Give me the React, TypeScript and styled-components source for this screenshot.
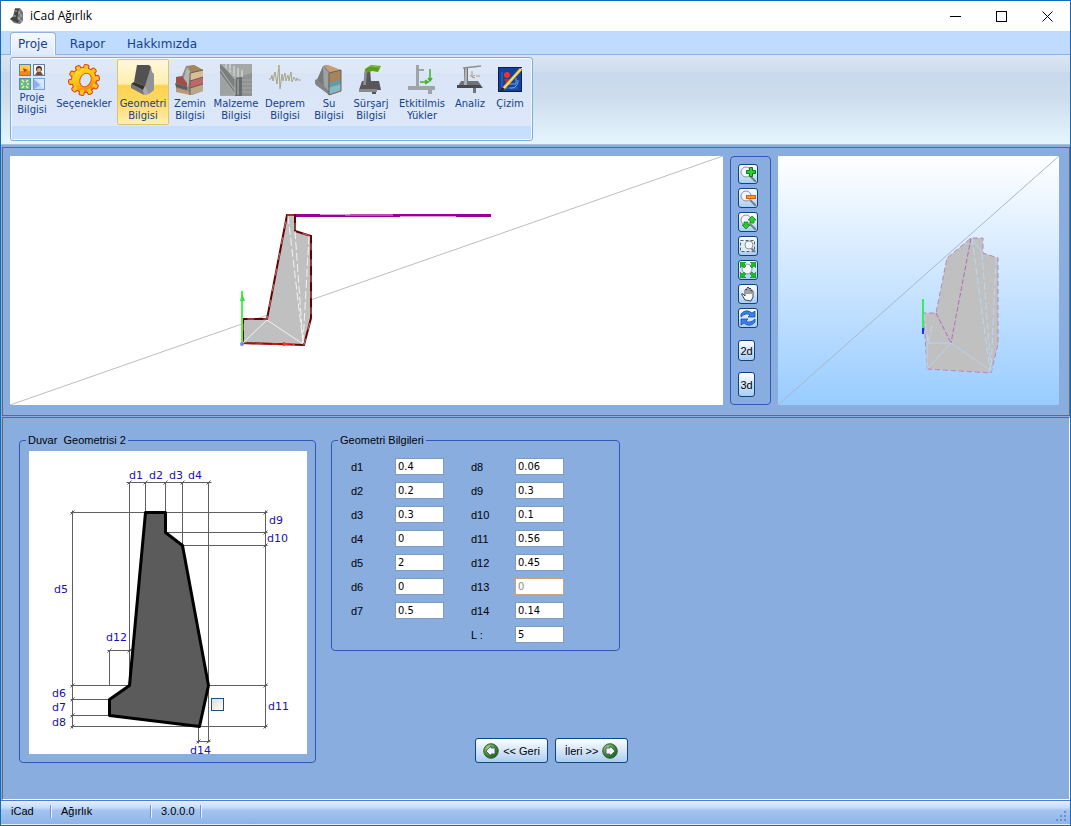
import React from "react";
import styled, { createGlobalStyle, css } from "styled-components";

const uiFont = `"Liberation Sans", Arial, sans-serif`;
const wideFont = `"DejaVu Sans", Verdana, sans-serif`;

const GlobalStyle = createGlobalStyle`
  * { box-sizing: border-box; }
  body { margin: 0; background: #8aade0; font-family: ${uiFont}; font-size: 11px; color: #000; }
  button, input { font: inherit; color: inherit; }
`;

const Window = styled.div`
  display: flex;
  flex-direction: column;
  min-height: 100vh;
  border: 1px solid #0f6cbd;
`;

/* Title bar */
const TitleBar = styled.header`
  display: flex;
  align-items: center;
  height: 30px;
  padding-left: 9px;
  background: #fff;
`;

const Title = styled.h1`
  flex: 1;
  margin: 0 0 0 6px;
  font: 400 12px/16px "Open Sans", "Noto Sans", sans-serif;
`;

const CaptionButton = styled.button`
  display: flex;
  align-items: center;
  justify-content: center;
  width: 46px;
  height: 30px;
  padding: 0;
  border: 0;
  background: none;
`;

/* Ribbon */
const TabStrip = styled.nav`
  position: relative;
  z-index: 1;
  display: flex;
  height: 23px;
  padding: 1px 0 0 9px;
  background: #bfdbff;
`;

const Tab = styled.button<{ $active?: boolean }>`
  height: 23px;
  padding: 0 7px;
  margin-right: 6px;
  border: 1px solid transparent;
  border-bottom: 0;
  border-radius: 4px 4px 0 0;
  background: none;
  color: #15428b;
  font: 12px/20px ${wideFont};
  ${(p) =>
    p.$active &&
    css`
      border-color: #8db2e3;
      background: linear-gradient(#f5f9ff, #dfeafa);
      box-shadow: inset 1px 1px 0 #fff, inset -1px 0 0 #fff;
    `}
`;

const Ribbon = styled.div`
  height: 91px;
  padding: 2px 8px 3px 9px;
  border-top: 1px solid #8db2e3;
  border-bottom: 1px solid #a3c2e2;
  background: linear-gradient(#dbe5f3 0, #cfdded 17px, #c8d8ee 18px, #cfdeed 45px, #e3f4fd 86px);
`;

const Group = styled.div`
  display: flex;
  align-items: flex-start;
  width: max-content;
  height: 84px;
  padding: 1px 1px 0 2px;
  border: 1px solid #86abd2;
  border-radius: 3px;
  background: linear-gradient(#e1e9f6 0, #dee7f5 15px, #d9e5f6 15px, #dce8f8 68px, #c5deff 68px, #c8e0ff 100%);
  box-shadow: inset 0 0 0 1px #f4f9ff;
`;

const RibbonButton = styled.button<{ $width: number; $active?: boolean }>`
  display: flex;
  flex-direction: column;
  align-items: center;
  gap: 2px;
  width: ${(p) => p.$width}px;
  height: 66px;
  padding: 4px 0 0;
  border: 1px solid transparent;
  border-radius: 2px;
  background: none;
  color: #15428b;
  font: 10px/12px ${wideFont};
  white-space: pre-line;
  ${(p) =>
    p.$active &&
    css`
      border-color: #dcc278;
      background: linear-gradient(#fff9dc 0, #ffeeae 38%, #ffd24f 39%, #ffd964 65%, #fff0b0 100%);
    `}
`;

/* Views */
const ViewPanel = styled.section`
  display: flex;
  margin-top: 2px;
  padding: 8px 10px 10px 7px;
  border: 1px solid #646a70;
  background: #8aade0;
  margin-left: 1px;
`;

const View = styled.div<{ $share: number; $shaded?: boolean }>`
  flex: ${(p) => p.$share} 1 0;
  min-width: 0;
  height: 249px;
  background: ${(p) => (p.$shaded ? "linear-gradient(#fff, #99ccff)" : "#fff")};
  svg { display: block; width: 100%; height: 100%; }
`;

const ToolColumn = styled.div`
  display: flex;
  flex-direction: column;
  align-items: flex-start;
  gap: 4px;
  width: 41px;
  margin: 0 7px;
  padding: 7px;
  border: 1px solid #2f5bb7;
  border-radius: 4px;
`;

const buttonFace = css`
  border: 1px solid #0d4580;
  border-radius: 3px;
  background: linear-gradient(#fdfeff, #d5e6f9 50%, #a9cdf3);
`;

const ToolButton = styled.button`
  display: flex;
  width: 20px;
  height: 20px;
  padding: 1px;
  ${buttonFace}
`;

const ModeButton = styled.button<{ $tall?: boolean }>`
  width: 17px;
  height: ${(p) => (p.$tall ? 25 : 21)}px;
  margin-top: ${(p) => (p.$tall ? 7 : 8)}px;
  padding: 0;
  font-size: 11px;
  ${buttonFace}
`;

/* Form */
const FormPanel = styled.main`
  display: flex;
  flex: 1;
  align-items: flex-start;
  gap: 15px;
  margin-top: 1px;
  margin-left: 1px;
  padding: 16px;
  border: 1px solid #646a70;
  border-right-color: #fff;
  border-bottom-color: #fff;
  background: #8aade0;
`;

const Box = styled.fieldset`
  min-width: 0;
  margin: 0;
  padding: 0;
  border: 1px solid #2f5bb7;
  border-radius: 4px;
`;

const Legend = styled.legend`
  margin-left: 6px;
  padding: 0 2px;
  line-height: 13px;
  white-space: pre;
`;

const Sketch = styled.div`
  position: relative;
  width: 278px;
  height: 303px;
  margin: 4px 8px 8px 9px;
  background: #fff;
  svg { display: block; overflow: visible; }
`;

const SketchCheck = styled.input`
  position: absolute;
  left: 182px;
  top: 247px;
  width: 13px;
  height: 13px;
  margin: 0;
  appearance: none;
  border: 1px solid #1c5180;
  background: linear-gradient(135deg, #dcdcd7, #fff);
`;

const FormColumn = styled.div`
  display: flex;
  flex-direction: column;
  align-items: flex-start;
`;

const Fields = styled.div`
  display: grid;
  grid-template-columns: 120px 120px;
  width: 287px;
  padding: 11px 0 7px 19px;
`;

const FieldList = styled.div`
  display: flex;
  flex-direction: column;
  gap: 7px;
`;

const Field = styled.label`
  display: flex;
  align-items: center;
  justify-content: space-between;
  width: 93px;
  height: 17px;
`;

const TextBox = styled.input`
  width: 49px;
  height: 17px;
  padding: 0 2px;
  border: 1px solid #7f9db9;
  border-radius: 0;
  background: #fff;
  font: 11px/13px "DejaVu Sans Condensed", Tahoma, sans-serif;
  &:disabled { border-color: #c9a66b; color: #8a8a8a; }
`;

const NavRow = styled.div`
  display: flex;
  gap: 7px;
  margin: 87px 0 0 144px;
`;

const NavButton = styled.button`
  display: flex;
  align-items: center;
  justify-content: center;
  gap: 4px;
  width: 73px;
  height: 25px;
  padding: 0;
  white-space: nowrap;
  ${buttonFace}
`;

/* Status bar */
const StatusBar = styled.footer`
  display: flex;
  align-items: center;
  height: 25px;
  padding-bottom: 2px;
  border-top: 1px solid #4a7fc4;
  border-bottom: 1px solid #e8eef8;
  background: linear-gradient(#e3efff 0, #c2dafb 7px, #a5c5f0 9px, #8fb4e8 100%);
`;

const StatusCell = styled.span<{ $width: number }>`
  width: ${(p) => p.$width}px;
  padding-left: 10px;
  border-right: 1px solid #6c97cf;
  box-shadow: 1px 0 0 #eef5ff;
  line-height: 13px;
`;

const Grip = styled.svg`
  margin: 8px 3px 0 auto;
`;

/* Ribbon icons */
const ProjectIcon = () => (
  <svg width="26" height="26" viewBox="0 0 26 26">
    <rect x=".5" y=".5" width="11" height="11" fill="#ffcf3f" stroke="#5d7fa8" />
    <path d="M1 7h10v4H1z" fill="#f08a1c" />
    <path d="M4 4l5 2-4 2z" fill="#d5311a" />
    <rect x="14.500" y=".5" width="11" height="11" fill="#f4f6fa" stroke="#5d7fa8" />
    <circle cx="20" cy="5" r="3" fill="#4d342b" />
    <circle cx="20" cy="6" r="2" fill="#e6b08a" />
    <path d="M16 11l2-3h4l2 3z" fill="#6b4c44" />
    <rect x=".5" y="14.500" width="11" height="11" fill="#68b98c" stroke="#5d8aa8" />
    <path d="M3 16l2 2M9 16l-2 2M3 24l2-2M9 24l-2-2M2 20h2M8 20h2" stroke="#f2f3a5" strokeWidth="1.500" fill="none" />
    <rect x="14.500" y="14.500" width="11" height="11" fill="#c3d8fb" stroke="#7d9fd0" />
    <path d="M15 15l8 5-8 5z" fill="#8fb0ee" />
    <path d="M15 15h10v10z" fill="#e4eefe" opacity=".7" />
  </svg>
);

const gearTeeth = Array.from({ length: 10 }, (_, i) => i * 36);

const GearIcon = () => (
  <svg width="32" height="32" viewBox="0 0 32 32">
    <defs>
      <linearGradient id="gear" gradientUnits="userSpaceOnUse" x1="8" y1="0" x2="22" y2="32">
        <stop offset="0" stopColor="#ffee3a" />
        <stop offset=".5" stopColor="#ffc313" />
        <stop offset="1" stopColor="#f5600c" />
      </linearGradient>
      <mask id="gearHole">
        <path d="M0 0h32v32H0z" fill="#fff" />
        <ellipse cx="17.500" cy="16" rx="5.500" ry="7" transform="rotate(25 17.500 16)" fill="#000" />
      </mask>
    </defs>
    <g mask="url(#gearHole)">
      <g fill="#dc3f10">
        <circle cx="16" cy="16" r="13" />
        {gearTeeth.map((a) => (
          <rect key={a} x="13" y="0" width="6" height="6" rx="2" transform={`rotate(${a + 10} 16 16)`} />
        ))}
      </g>
      <path d="M16 16m-12 0a12 12 0 1 0 24 0a12 12 0 1 0-24 0" fill="url(#gear)" />
      <g fill="#ffc21a">
        {gearTeeth.map((a) => (
          <rect key={a} x="14" y="1" width="4" height="5" rx="1" transform={`rotate(${a + 10} 16 16)`} />
        ))}
      </g>
    </g>
    <ellipse cx="17.500" cy="16" rx="5.500" ry="7" transform="rotate(25 17.500 16)" fill="none" stroke="#dd5512" />
  </svg>
);

const WallIcon = () => (
  <svg width="32" height="32" viewBox="0 0 32 32">
    <path d="M24 3l1 5 2 2v16l-5 4-5 1-3-6 4-5z" fill="#939396" />
    <path d="M10 1h12l2 2-6 19-11-4z" fill="#515154" />
    <path d="M7 18l-3 2 12 6 2-4z" fill="#333336" />
    <path d="M4 20l12 6 1 5-13-7z" fill="#77777a" />
    <path d="M22 30l-5 1-1-5 2-4z" fill="#a9a9ac" />
  </svg>
);

const SoilIcon = () => (
  <svg width="32" height="32" viewBox="0 0 32 32">
    <path d="M12 2l8-1 9 5v21l-11 4-16-4v-8l6-7z" fill="#8b8b88" />
    <path d="M13 3l7-2 9 5-11 3z" fill="#a8845e" />
    <path d="M16 9l13-3v8l-13 4z" fill="#d9bd95" />
    <path d="M16 17l13-4v8l-13 3z" fill="#bd6a66" />
    <path d="M16 24l13-4v7l-13 4z" fill="#bda789" />
    <path d="M13 3l4 6-3 14-6-3z" fill="#b5b6b8" />
    <path d="M2 13l6-1 5 7v4L2 19z" fill="#a04e4a" />
    <path d="M1 19l12 4v3L2 23z" fill="#5c5c5c" />
    <path d="M2 24l14 4v3L2 28z" fill="#bd9a72" />
    <path d="M16 9v22M16 17l13-4M16 24l13-4M16 9l13-3" stroke="#6b5d50" fill="none" />
  </svg>
);

const MaterialIcon = () => (
  <svg width="32" height="32" viewBox="0 0 32 32">
    <path d="M0 0h32v32H0z" fill="#a4a8a6" />
    <path d="M21 12l11-3v23H20z" fill="#8f9492" />
    <path d="M0 0l17 15v17L0 9z" fill="#7b7f7d" />
    <path d="M14 14l8-1v19h-7z" fill="#686c6a" />
    <path d="M6 0v5M10 0v9M14 2v10M18 4v9M22 6v7" stroke="#cfd2d0" strokeWidth="1.500" />
    <path d="M4 2l12 13M2 0l13 15v16M8 3l8 10M18 15v16M0 5l15 21" stroke="#b4b8b6" fill="none" />
    <path d="M22 16h10M22 20h10M22 24h10M22 28h10" stroke="#a3a8a6" fill="none" />
    <path d="M0 11l14 20H0z" fill="#9ea3a1" />
  </svg>
);

const QuakeIcon = () => (
  <svg width="32" height="32" viewBox="0 0 32 32">
    <path d="M0 15h2l1-4 1 6 2-9 2 12 2-19 1 24 2-15 1 7 2-8 1 8 2-6 1 6 2-9 1 10 2-5 2 4 1-3 1 2h3" fill="none" stroke="#a8a58b" />
  </svg>
);

const WaterIcon = () => (
  <svg width="32" height="32" viewBox="0 0 32 32">
    <path d="M10 2l4-1 14 6v20l-12 3-13-9v-3z" fill="#77797a" />
    <path d="M11 2l4-1 13 5-11 3z" fill="#c79d72" />
    <path d="M16 9l12-3v11l-13 3z" fill="#a8845c" />
    <path d="M15 19l13-3v11l-12 3z" fill="#5d9eac" />
    <path d="M15 24l13-4v7l-12 3z" fill="#86b8c4" />
    <path d="M10 2l6 7-1 19-4-2z" fill="#9fa1a3" />
    <path d="M2 16l2-1 12 12v4L2 20z" fill="#828486" />
    <path d="M28 6v21l-12 4V9z" fill="none" stroke="#6a6358" />
  </svg>
);

const SurchargeIcon = () => (
  <svg width="32" height="32" viewBox="0 0 32 32">
    <path d="M10 5h5l1 12h8l2 9h-5v4h-4v-4H4l3-9h2z" fill="#55575a" />
    <path d="M4 25h18v3H4z" fill="#87898b" />
    <path d="M10 6h2l-1 15H8z" fill="#8b8d90" />
    <path d="M10 5l6-4 10 1-3 6-6-1-5 2z" fill="#5c9f1f" />
    <path d="M15 2l10 1" stroke="#8bc24a" />
  </svg>
);

const LoadIcon = () => (
  <svg width="32" height="32" viewBox="0 0 32 32">
    <path d="M10 1h3v21h16v4h-3v4h-4v-4H2v-4h8z" fill="#9fa4a8" />
    <path d="M13 6h5" stroke="#9fa4a8" strokeWidth="2" />
    <path d="M24 5v12M22 14l2 3 2-3M14 18h9M19 16l3 2-3 2" fill="none" stroke="#3fb321" strokeWidth="1.500" />
  </svg>
);

const AnalysisIcon = () => (
  <svg width="32" height="32" viewBox="0 0 32 32">
    <path d="M10 4h4v13h10l5 7h-7v5h-3v-5H3l4-7h3z" fill="#6f7376" />
    <path d="M3 21h23l2 3H3z" fill="#484b4e" />
    <path d="M11 4h2v17h-3z" fill="#b0b4b7" />
    <path d="M9 4l18-2" stroke="#8e9194" strokeWidth="1.500" />
    <path d="M18 7v6l3 1M16 11l2 2 3-2M22 12h4" stroke="#aa9d7a" fill="none" />
  </svg>
);

const DrawIcon = () => (
  <svg width="32" height="32" viewBox="0 0 32 32">
    <rect x="4.500" y="3.500" width="23" height="24" fill="#12439f" stroke="#0b1c56" />
    <path d="M8 8v16h16" fill="none" stroke="#3d70c8" />
    <path d="M16 24a7 7 0 0 0 8-8M14 20h8v-6" fill="none" stroke="#7fa9ea" />
    <circle cx="13" cy="11" r="3" fill="#f03420" />
    <path d="M10 15h6v4h-4z" fill="#d02418" />
    <path d="M27 5L9 25" stroke="#e9bd36" strokeWidth="3" />
    <path d="M28 4L10 24" stroke="#fff1a2" />
    <path d="M8 23l-2 5 5-3z" fill="#222" />
  </svg>
);

/* View tool icons */
const Lens = ({ x = 6, y = 6, r = 5 }: { x?: number; y?: number; r?: number }) => (
  <g>
    <path d={`M${x + r - 1} ${y + r - 1}L16 16`} stroke="#75808d" strokeWidth="2" />
    <circle cx={x} cy={y} r={r} fill="#f1f7fc" stroke="#8793a1" />
  </g>
);
const ToolSvg = ({ children }: { children: React.ReactNode }) => (
  <svg width="16" height="16" viewBox="0 0 16 16">{children}</svg>
);
const ZoomInIcon = () => (
  <ToolSvg>
    <Lens />
    <path d="M9.500 1.500h3v3h3v3h-3v3h-3v-3h-3v-3h3z" fill="#2fce2d" stroke="#087a10" />
  </ToolSvg>
);
const ZoomOutIcon = () => (
  <ToolSvg>
    <Lens />
    <rect x="6.500" y="5.500" width="9" height="3" fill="#f79a2b" stroke="#c96510" />
  </ToolSvg>
);
const ZoomDynamicIcon = () => (
  <ToolSvg>
    <Lens />
    <path d="M12 2l4 4h-2v3h-4V6H8zM6 15l-4-4h2V8h4v3h2z" fill="#2fce2d" stroke="#087a10" strokeWidth=".7" />
  </ToolSvg>
);
const ZoomWindowIcon = () => (
  <ToolSvg>
    <rect x=".5" y="2.500" width="14" height="11" fill="#e3ebf3" stroke="#57606b" strokeDasharray="3 2" />
    <path d="M11 10l4 4" stroke="#75808d" strokeWidth="2" />
    <circle cx="9" cy="7" r="4" fill="#f6faff" stroke="#8793a1" />
  </ToolSvg>
);
const ZoomExtentsIcon = () => (
  <ToolSvg>
    <Lens x={7} y={7} r={5} />
    <path d="M0 0h6L4 2l2 2-2 2-2-2-2 2zM16 0v6l-2-2-2 2-2-2 2-2-2-2zM0 16v-6l2 2 2-2 2 2-2 2 2 2zM16 16h-6l2-2-2-2 2-2 2 2 2-2z" fill="#1fba28" stroke="#087a10" strokeWidth=".5" />
  </ToolSvg>
);
const PanIcon = () => (
  <ToolSvg>
    <path
      d="M5 14L2 9q-1-2 1-1l2 2V4q1-2 2 0V2q1-2 2 0v1q1-2 2 0v2q1-1 2 0v6l-2 4zM7 4v4M9 3v5M11 4v4"
      fill="#f7f9fb"
      stroke="#30363e"
      strokeWidth=".9"
    />
  </ToolSvg>
);
const RotateIcon = () => (
  <ToolSvg>
    <path d="M1 4q5-6 11-1l3-2v6H8l2-2Q6 2 1 7z" fill="#3a82e8" stroke="#1749b4" strokeWidth=".8" />
    <path d="M15 12q-5 6-11 1l-3 2V9h7l-2 2q4 3 9-2z" fill="#3a82e8" stroke="#1749b4" strokeWidth=".8" />
  </ToolSvg>
);

const ArrowBall = ({ forward }: { forward?: boolean }) => (
  <svg width="16" height="16" viewBox="0 0 16 16">
    <defs>
      <radialGradient id="ball" cx=".35" cy=".3" r=".8">
        <stop offset="0" stopColor="#a6dc85" />
        <stop offset=".5" stopColor="#3f9a32" />
        <stop offset="1" stopColor="#045a0c" />
      </radialGradient>
    </defs>
    <circle cx="8" cy="8" r="7.300" fill="url(#ball)" stroke="#4a5648" />
    <path d={forward ? "M4 5h4V3l5 5-5 5v-2H4z" : "M12 5H8V3L3 8l5 5v-2h4z"} fill="#f2f2f8" stroke="#3c4474" strokeWidth=".8" />
  </svg>
);

const ribbonItems = [
  { label: "Proje\nBilgisi", width: 38, Icon: ProjectIcon },
  { label: "Seçenekler", width: 66, Icon: GearIcon },
  { label: "Geometri\nBilgisi", width: 52, Icon: WallIcon, active: true },
  { label: "Zemin\nBilgisi", width: 42, Icon: SoilIcon },
  { label: "Malzeme\nBilgisi", width: 50, Icon: MaterialIcon },
  { label: "Deprem\nBilgisi", width: 48, Icon: QuakeIcon },
  { label: "Su\nBilgisi", width: 40, Icon: WaterIcon },
  { label: "Sürşarj\nBilgisi", width: 44, Icon: SurchargeIcon },
  { label: "Etkitilmis\nYükler", width: 58, Icon: LoadIcon },
  { label: "Analiz", width: 38, Icon: AnalysisIcon },
  { label: "Çizim", width: 42, Icon: DrawIcon },
];

const tools = [
  { name: "Yakınlaş", Icon: ZoomInIcon },
  { name: "Uzaklaş", Icon: ZoomOutIcon },
  { name: "Dinamik", Icon: ZoomDynamicIcon },
  { name: "Pencere", Icon: ZoomWindowIcon },
  { name: "Tümü", Icon: ZoomExtentsIcon },
  { name: "Kaydır", Icon: PanIcon },
  { name: "Döndür", Icon: RotateIcon },
];

type FieldItem = { label: string; value: string; disabled?: boolean };

const leftFields: FieldItem[] = [
  { label: "d1", value: "0.4" },
  { label: "d2", value: "0.2" },
  { label: "d3", value: "0.3" },
  { label: "d4", value: "0" },
  { label: "d5", value: "2" },
  { label: "d6", value: "0" },
  { label: "d7", value: "0.5" },
];

const rightFields: FieldItem[] = [
  { label: "d8", value: "0.06" },
  { label: "d9", value: "0.3" },
  { label: "d10", value: "0.1" },
  { label: "d11", value: "0.56" },
  { label: "d12", value: "0.45" },
  { label: "d13", value: "0", disabled: true },
  { label: "d14", value: "0.14" },
  { label: "L :", value: "5" },
];

const dimensionLabels: [string, number, number][] = [
  ["d1", 129, 479], ["d2", 149, 479], ["d3", 169, 479], ["d4", 188, 479],
  ["d9", 269, 524], ["d10", 267, 542], ["d5", 54, 593], ["d12", 106, 641],
  ["d6", 52, 697], ["d7", 52, 711], ["d8", 52, 726], ["d11", 268, 710], ["d14", 190, 754],
];

const ticks: [number, number][] = [
  [129, 482], [145, 482], [165, 482], [182, 482], [208, 482],
  [72, 512], [265, 512], [265, 532], [265, 545], [72, 685], [265, 685],
  [72, 699], [72, 715], [72, 726], [265, 726], [109, 650], [129, 650], [198, 741], [208, 741],
];

const FrontView = () => (
  <svg viewBox="10 156 713 249" preserveAspectRatio="xMidYMid slice">
    <path d="M10 405L723 156" stroke="#bdbdbd" />
    <path d="M287 215h8v16l16 5v82l-7 27-61-2v-24h24z" fill="#c0c0c0" stroke="#660000" strokeWidth="2" />
    <path d="M287 215h8v16l16 5v82l-7 27-61-2v-24h24z" fill="none" stroke="#e8caca" strokeWidth=".6" strokeDasharray="7 9" />
    <path d="M267 320l-24 23M267 320l36 24" stroke="#f2f2f2" fill="none" />
    <path d="M288 216l15 127M295 231l8 112M309 236l-6 107" stroke="#f2f2f2" strokeDasharray="8 3" fill="none" />
    <path d="M296 215.500h195" stroke="#990099" strokeWidth="3" />
    <path d="M320 214.500h30M345 215h48" stroke="#d9a0d9" />
    <path d="M400 216.500h56" stroke="#d9a0d9" />
    <path d="M243 343.500l50 1" stroke="#e00000" />
    <path d="M283 342l7 2-7 2z" fill="#f03030" />
    <path d="M242 343v-52" stroke="#50f050" strokeWidth="2" />
    <path d="M240 301l2-8 3 8z" fill="#3ee03e" />
    <circle cx="242" cy="344" r="2" fill="#8080ff" />
  </svg>
);

const SolidView = () => (
  <svg viewBox="778 156 281 249" preserveAspectRatio="xMidYMid slice">
    <path d="M778 405L1059 156" stroke="#a6b8c8" />
    <path d="M927 369l64 4 7-29v-86l-15-5v-15h-12l-24 20-11 55h-13l2 22z" fill="#c0c0c0" />
    <path d="M927 369l64 4 7-29v-86l-15-5v-15h-12l-24 20-11 55h-13l2 22z" fill="none" stroke="#b983c6" strokeDasharray="5 3" />
    <path d="M971 238l-20 105M936 313l15 30" stroke="#b06cb8" strokeDasharray="5 2" fill="none" />
    <path d="M927 343h24M927 343v26M951 343l-24 26M951 343l40 28M972 238l10 15" stroke="#b9d3ee" fill="none" />
    <path d="M972 238l18 133M982 253l9 118M996 258l-5 113M924 314l4 29 4-18" stroke="#b9d8f4" strokeDasharray="7 3" fill="none" />
    <path d="M923 299v29" stroke="#30ee60" strokeWidth="2" />
    <path d="M923 328v6" stroke="#2030e0" strokeWidth="2" />
  </svg>
);

const WallSketch = () => (
  <svg width="278" height="303" viewBox="29 451 278 303" fontFamily="DejaVu Sans, Verdana, sans-serif" fontSize="11">
    <g transform="translate(.5 .5)">
      <path
        d="M126 482h85M129 482v203M145 482v30M165 482v50M182 482v63M208 482v260M70 512h197M72 510v218M265 510v218M165 532h102M182 545h85M70 685h59M208 685h59M70 699h39M70 715h39M70 726h197M107 650h24M109 650v35M198 726v17M196 741h14"
        fill="none"
        stroke="#5f5f5f"
      />
      {ticks.map(([x, y]) => (
        <path key={`${x}-${y}`} d={`M${x - 2} ${y + 2}l4-4`} stroke="#5f5f5f" />
      ))}
      <path d="M145 512h20v20l17 13 26 140-9 41-90-11v-16l20-14z" fill="#5b5b5b" stroke="#000" strokeWidth="3" strokeLinejoin="round" />
    </g>
    <g fill="#1c10a8">
      {dimensionLabels.map(([text, x, y]) => (
        <text key={text} x={x} y={y}>{text}</text>
      ))}
    </g>
  </svg>
);

const FieldRow = ({ label, value, disabled }: FieldItem) => (
  <Field>
    {label}
    <TextBox type="text" defaultValue={value} disabled={disabled} />
  </Field>
);

export default function App() {
  return (
    <Window>
      <GlobalStyle />
      <TitleBar>
        <svg width="14" height="16" viewBox="0 0 14 16">
          <path d="M5 0h5l3 4v9l-3 3-6-1-4-4 3-3z" fill="#77797b" />
          <path d="M5 1h4l-2 10-3-1zM0 11l3-2 6 3-1 3z" fill="#404244" />
          <path d="M6 2v2M9 3v3M11 6v3M9 9v3M5 7v2M11 12v2" stroke="#b9bbbd" />
        </svg>
        <Title>iCad Ağırlık</Title>
        <CaptionButton aria-label="Simge durumuna küçült">
          <svg width="11" height="11"><path d="M0 5.500h11" stroke="#000" /></svg>
        </CaptionButton>
        <CaptionButton aria-label="Ekranı kapla">
          <svg width="11" height="11"><rect x=".5" y=".5" width="10" height="10" fill="none" stroke="#000" /></svg>
        </CaptionButton>
        <CaptionButton aria-label="Kapat">
          <svg width="11" height="11"><path d="M.5.5l10 10M10.500.5l-10 10" stroke="#000" /></svg>
        </CaptionButton>
      </TitleBar>

      <TabStrip>
        <Tab $active>Proje</Tab>
        <Tab>Rapor</Tab>
        <Tab>Hakkımızda</Tab>
      </TabStrip>
      <Ribbon>
        <Group>
          {ribbonItems.map(({ label, width, Icon, active }) => (
            <RibbonButton key={label} $width={width} $active={active}>
              <Icon />
              <span>{label}</span>
            </RibbonButton>
          ))}
        </Group>
      </Ribbon>

      <ViewPanel>
        <View $share={713}><FrontView /></View>
        <ToolColumn>
          {tools.map(({ name, Icon }) => (
            <ToolButton key={name} aria-label={name}><Icon /></ToolButton>
          ))}
          <ModeButton>2d</ModeButton>
          <ModeButton $tall>3d</ModeButton>
        </ToolColumn>
        <View $share={281} $shaded><SolidView /></View>
      </ViewPanel>

      <FormPanel>
        <Box>
          <Legend>{"Duvar  Geometrisi 2"}</Legend>
          <Sketch>
            <WallSketch />
            <SketchCheck type="checkbox" aria-label="d14" />
          </Sketch>
        </Box>
        <FormColumn>
          <Box>
            <Legend>Geometri Bilgileri</Legend>
            <Fields>
              <FieldList>{leftFields.map((f) => <FieldRow key={f.label} {...f} />)}</FieldList>
              <FieldList>{rightFields.map((f) => <FieldRow key={f.label} {...f} />)}</FieldList>
            </Fields>
          </Box>
          <NavRow>
            <NavButton><ArrowBall />&lt;&lt; Geri</NavButton>
            <NavButton>İleri &gt;&gt;<ArrowBall forward /></NavButton>
          </NavRow>
        </FormColumn>
      </FormPanel>

      <StatusBar>
        <StatusCell $width={50}>iCad</StatusCell>
        <StatusCell $width={100}>Ağırlık</StatusCell>
        <StatusCell $width={50}>3.0.0.0</StatusCell>
        <Grip width="12" height="12" viewBox="0 0 12 12">
          <path d="M9 1h2v2H9zM5 5h2v2H5zM9 5h2v2H9zM1 9h2v2H1zM5 9h2v2H5zM9 9h2v2H9z" fill="#6c8fc4" />
        </Grip>
      </StatusBar>
    </Window>
  );
}
